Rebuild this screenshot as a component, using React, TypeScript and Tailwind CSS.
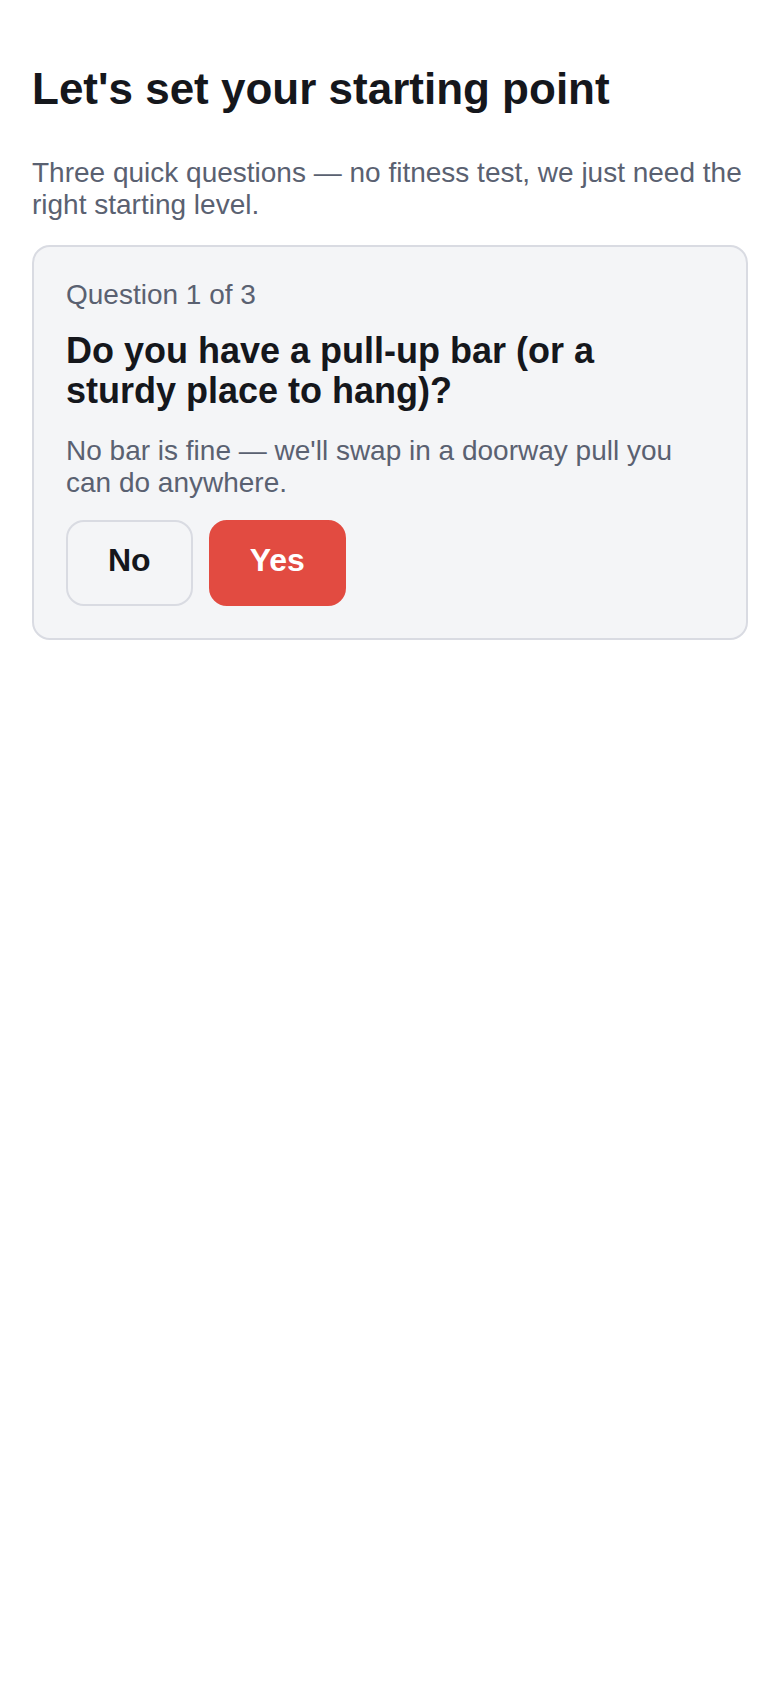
import React from "react";

export default function App() {
  return (
    <div
      className="min-h-[1688px] w-full bg-white px-8 pt-[63px] text-[#15171c]"
      style={{ fontFamily: '"Liberation Sans", Arial, sans-serif' }}
    >
      <h1 className="text-[44px] font-bold leading-[52px] text-[#15171c]">
        Let's set your starting point
      </h1>
      <p className="mt-[42px] text-[28px] leading-[32px] text-[#5a6171]">
        Three quick questions — no fitness test, we just need the right starting level.
      </p>
      <div className="mt-6 rounded-[18px] border-2 border-[#d9dbe2] bg-[#f4f5f7] p-8">
        <div className="text-[28px] leading-[32px] text-[#5a6171]">Question 1 of 3</div>
        <h2 className="mt-[20px] pr-8 text-[36px] font-bold leading-[40px] text-[#15171c]">
          Do you have a pull-up bar (or a sturdy place to hang)?
        </h2>
        <p className="mt-[24px] pr-8 text-[28px] leading-[32px] text-[#5a6171]">
          No bar is fine — we'll swap in a doorway pull you can do anywhere.
        </p>
        <div className="mt-[21px] flex gap-4">
          <button className="flex h-[86px] items-center justify-center rounded-[18px] border-2 border-[#d9dbe2] bg-[#f4f5f7] px-[40px] pb-[6px] text-[32px] font-bold text-[#15171c]">
            No
          </button>
          <button className="flex h-[86px] items-center justify-center rounded-[18px] border-2 border-[#e24b41] bg-[#e24b41] px-[39px] pb-[6px] text-[32px] font-bold text-white">
            Yes
          </button>
        </div>
      </div>
    </div>
  );
}
